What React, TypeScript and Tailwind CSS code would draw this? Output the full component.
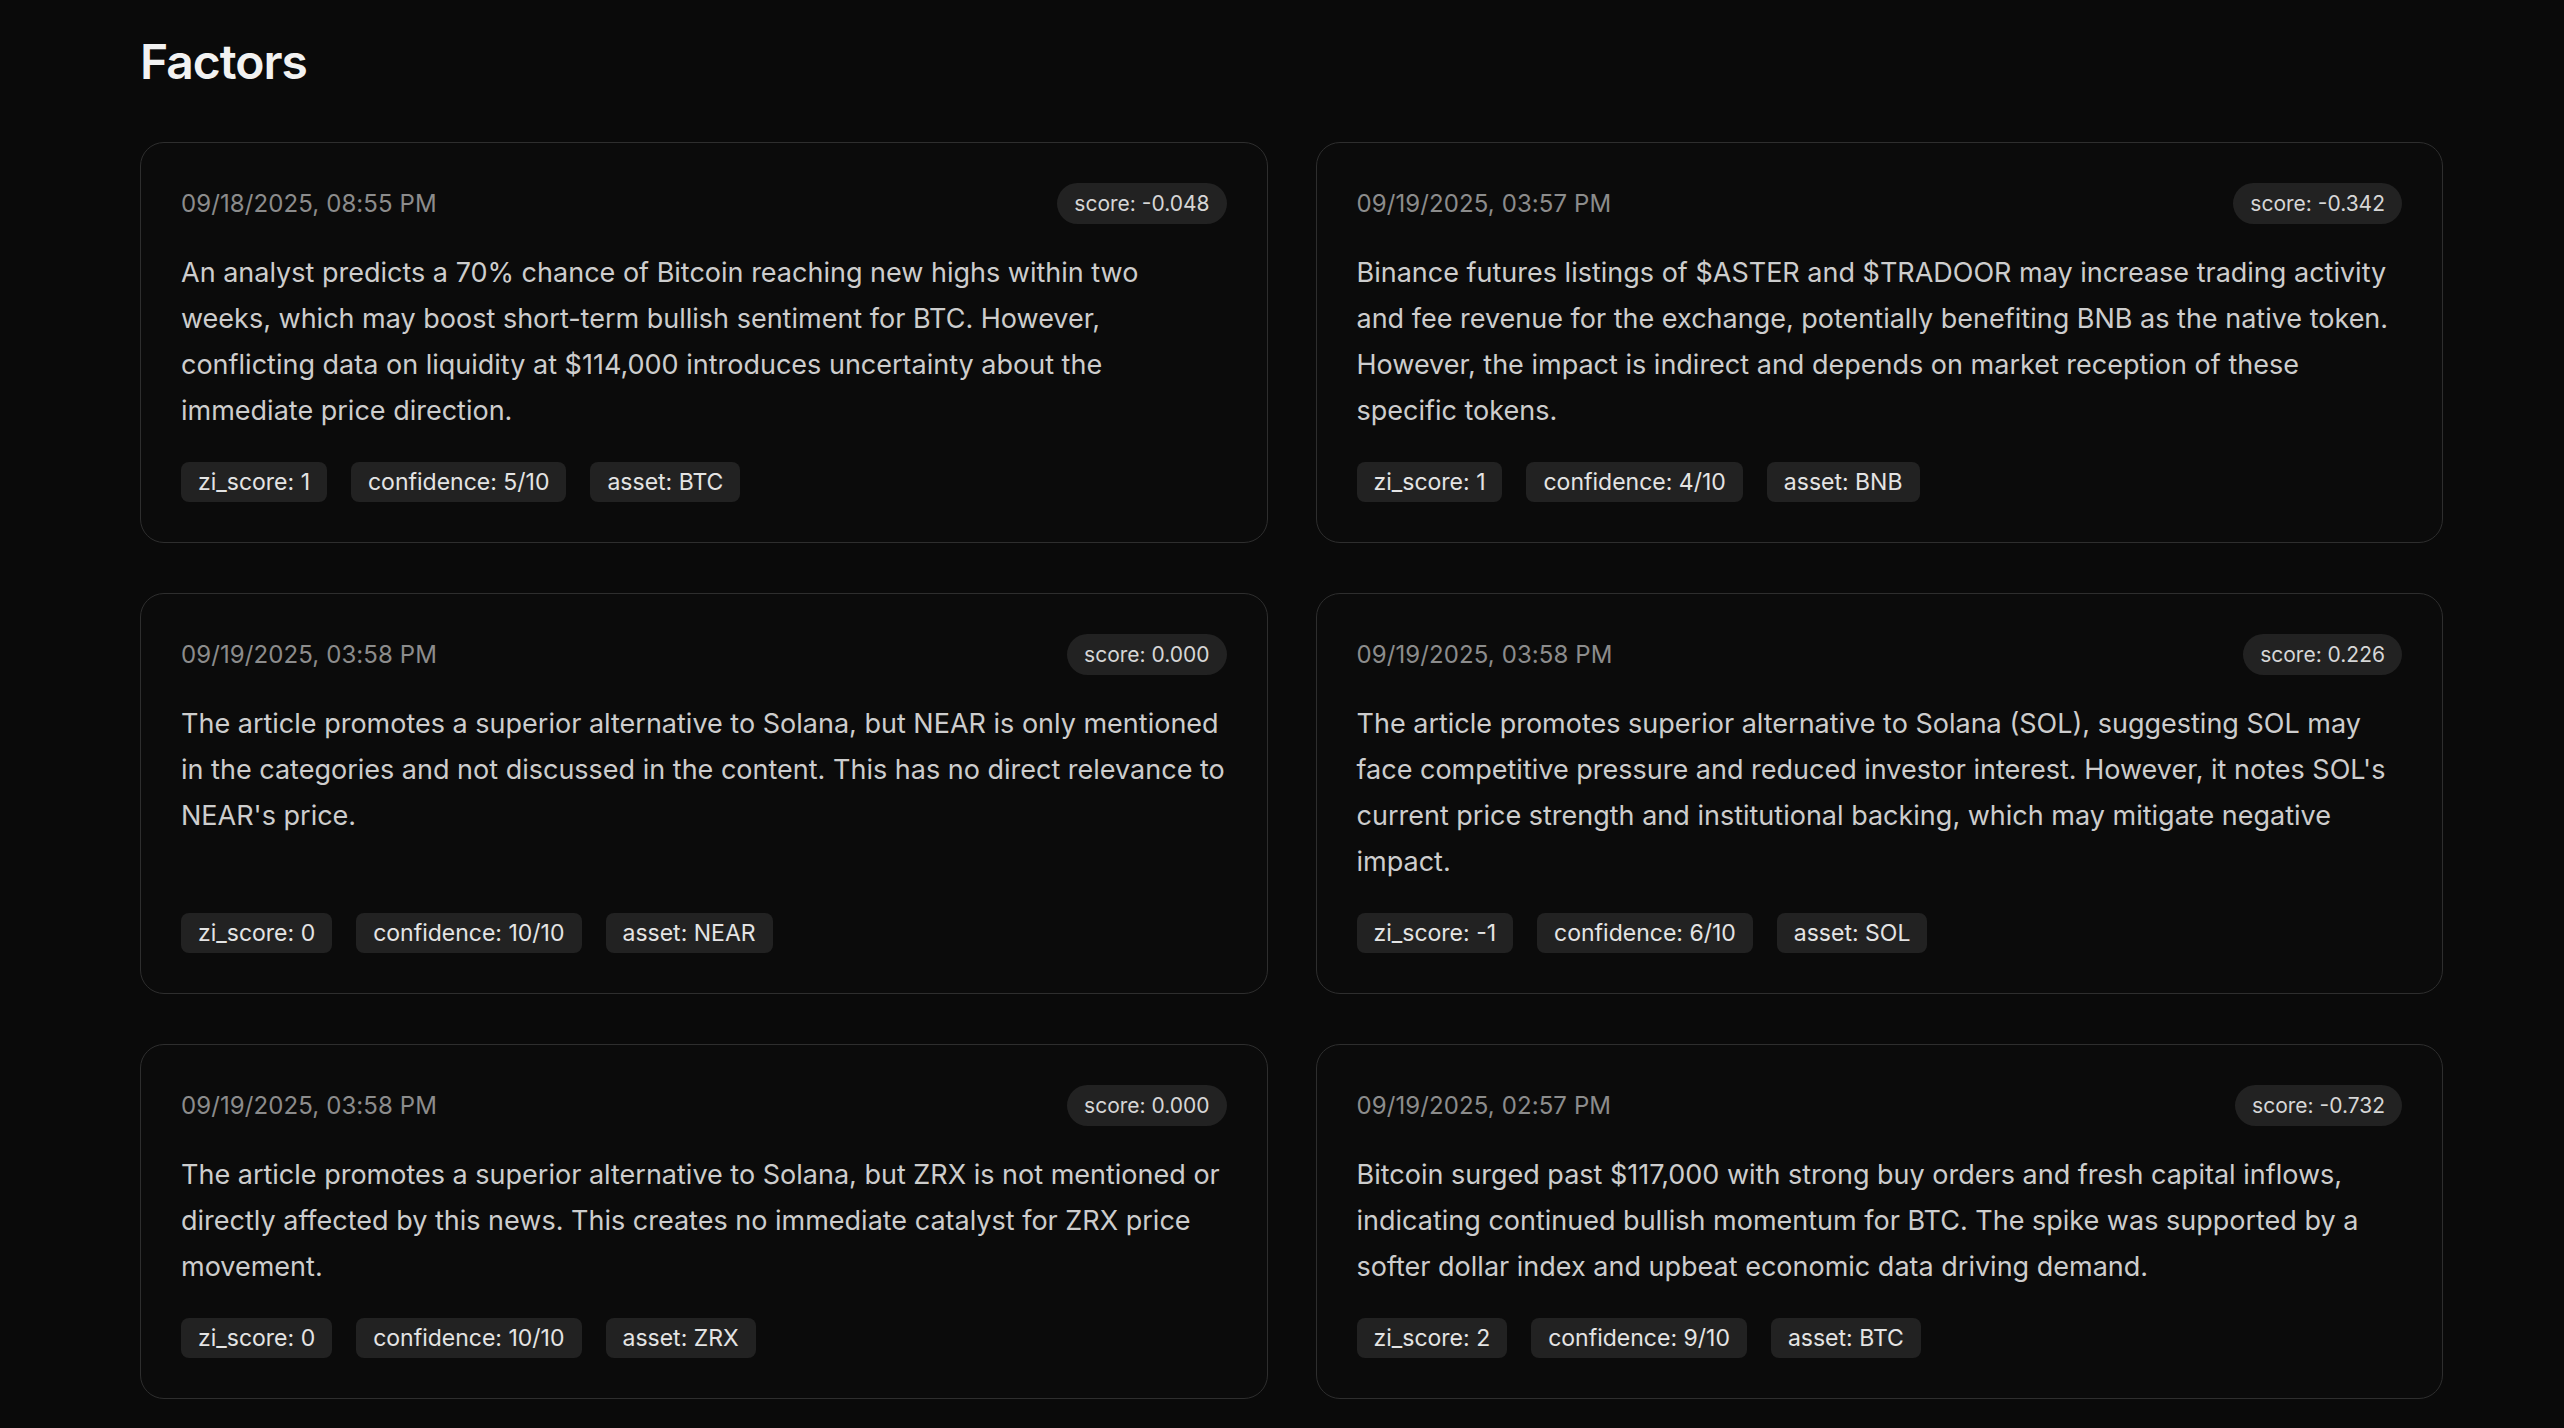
import React from "react";

type Factor = {
  date: string;
  score: string;
  text: string;
  zi: string;
  conf: string;
  asset: string;
};

const factors: Factor[] = [
  {
    date: "09/18/2025, 08:55 PM",
    score: "-0.048",
    text: "An analyst predicts a 70% chance of Bitcoin reaching new highs within two weeks, which may boost short-term bullish sentiment for BTC. However, conflicting data on liquidity at $114,000 introduces uncertainty about the immediate price direction.",
    zi: "1",
    conf: "5/10",
    asset: "BTC",
  },
  {
    date: "09/19/2025, 03:57 PM",
    score: "-0.342",
    text: "Binance futures listings of $ASTER and $TRADOOR may increase trading activity and fee revenue for the exchange, potentially benefiting BNB as the native token. However, the impact is indirect and depends on market reception of these specific tokens.",
    zi: "1",
    conf: "4/10",
    asset: "BNB",
  },
  {
    date: "09/19/2025, 03:58 PM",
    score: "0.000",
    text: "The article promotes a superior alternative to Solana, but NEAR is only mentioned in the categories and not discussed in the content. This has no direct relevance to NEAR's price.",
    zi: "0",
    conf: "10/10",
    asset: "NEAR",
  },
  {
    date: "09/19/2025, 03:58 PM",
    score: "0.226",
    text: "The article promotes superior alternative to Solana (SOL), suggesting SOL may face competitive pressure and reduced investor interest. However, it notes SOL's current price strength and institutional backing, which may mitigate negative impact.",
    zi: "-1",
    conf: "6/10",
    asset: "SOL",
  },
  {
    date: "09/19/2025, 03:58 PM",
    score: "0.000",
    text: "The article promotes a superior alternative to Solana, but ZRX is not mentioned or directly affected by this news. This creates no immediate catalyst for ZRX price movement.",
    zi: "0",
    conf: "10/10",
    asset: "ZRX",
  },
  {
    date: "09/19/2025, 02:57 PM",
    score: "-0.732",
    text: "Bitcoin surged past $117,000 with strong buy orders and fresh capital inflows, indicating continued bullish momentum for BTC. The spike was supported by a softer dollar index and upbeat economic data driving demand.",
    zi: "2",
    conf: "9/10",
    asset: "BTC",
  },
];

function Tag({ children }: { children: React.ReactNode }) {
  return (
    <span className="h-[40px] px-[17px] rounded-lg bg-[#222222] text-[#e4e4e4] text-[23px] leading-none flex items-center">
      {children}
    </span>
  );
}

function Card({ f }: { f: Factor }) {
  return (
    <div className="flex flex-col rounded-3xl border border-[#2e2e2e] bg-[#0b0b0b] p-10">
      <div className="flex items-center justify-between h-[41px]">
        <span className="text-[24px] leading-none text-[#8c8c8c] tracking-[0.1px]">{f.date}</span>
        <span className="h-[41px] px-[17px] rounded-full bg-[#222222] text-[#d6d6d6] text-[21px] leading-none flex items-center">
          score: {f.score}
        </span>
      </div>
      <p className="mt-[26px] text-[27px] leading-[46px] text-[#cdcdcd]">{f.text}</p>
      <div className="mt-auto pt-[28px] flex gap-6">
        <Tag>zi_score: {f.zi}</Tag>
        <Tag>confidence: {f.conf}</Tag>
        <Tag>asset: {f.asset}</Tag>
      </div>
    </div>
  );
}

export default function App() {
  return (
    <div
      className="min-h-screen bg-[#0a0a0a] pl-[140px] pr-[121px] pt-[38px] pb-[28px]"
      style={{ fontFamily: "Inter, 'Noto Sans', sans-serif" }}
    >
      <h1 className="text-[48px] leading-[48px] font-semibold text-[#f2f2f2] tracking-[-1px]">Factors</h1>
      <div className="mt-[56px] grid grid-cols-2 gap-x-12 gap-y-[50px]">
        {factors.map((f, i) => (
          <Card key={i} f={f} />
        ))}
      </div>
    </div>
  );
}
